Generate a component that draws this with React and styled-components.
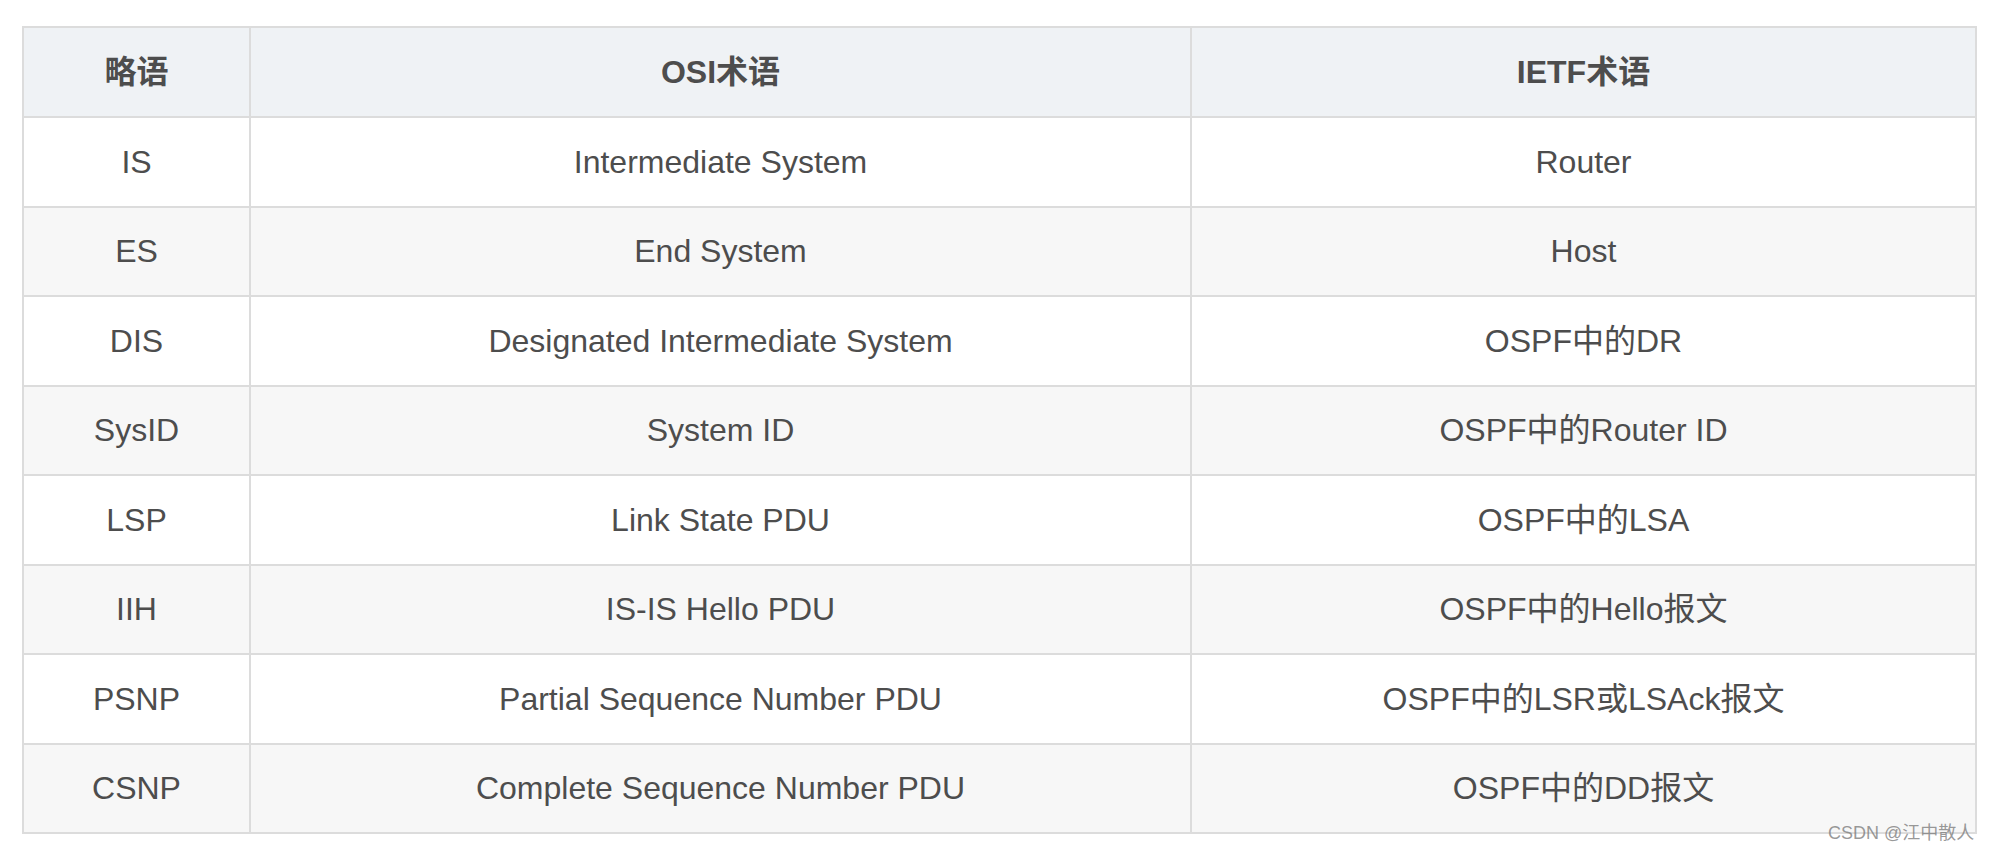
import React from "react";
import styled, { createGlobalStyle } from "styled-components";

const GlobalStyle = createGlobalStyle`
  body {
    margin: 0;
    background: #ffffff;
    font-family: "Liberation Sans", "Noto Sans CJK SC", sans-serif;
  }
`;

const Page = styled.div`
  position: relative;
  width: 2000px;
  height: 853px;
  padding: 26px 0 0 22px;
  box-sizing: border-box;
`;

const Table = styled.table`
  width: 1953px;
  border-collapse: collapse;
  table-layout: fixed;
  color: #4d4d4d;
  font-size: 32px;
`;

const HeadCell = styled.th`
  height: 88px;
  padding: 0;
  background: #eff2f5;
  border: 2px solid #dcdcdc;
  font-weight: bold;
  text-align: center;
  line-height: 36px;
`;

const Row = styled.tr`
  background: ${(p) => (p.$striped ? "#f7f7f7" : "#ffffff")};
`;

const Cell = styled.td`
  height: 87.5px;
  padding: 0;
  border: 2px solid #dcdcdc;
  text-align: center;
  line-height: 36px;
`;

const Watermark = styled.div`
  position: absolute;
  left: 1828px;
  top: 822px;
  font-size: 18px;
  line-height: 22px;
  color: rgba(120, 120, 120, 0.75);
  white-space: nowrap;
`;

const rows = [
  ["IS", "Intermediate System", "Router"],
  ["ES", "End System", "Host"],
  ["DIS", "Designated Intermediate System", "OSPF中的DR"],
  ["SysID", "System ID", "OSPF中的Router ID"],
  ["LSP", "Link State PDU", "OSPF中的LSA"],
  ["IIH", "IS-IS Hello PDU", "OSPF中的Hello报文"],
  ["PSNP", "Partial Sequence Number PDU", "OSPF中的LSR或LSAck报文"],
  ["CSNP", "Complete Sequence Number PDU", "OSPF中的DD报文"],
];

export default function App() {
  return (
    <Page>
      <GlobalStyle />
      <Table>
        <colgroup>
          <col style={{ width: 227 }} />
          <col style={{ width: 941 }} />
          <col style={{ width: 785 }} />
        </colgroup>
        <thead>
          <tr>
            <HeadCell>略语</HeadCell>
            <HeadCell>OSI术语</HeadCell>
            <HeadCell>IETF术语</HeadCell>
          </tr>
        </thead>
        <tbody>
          {rows.map((r, i) => (
            <Row key={r[0]} $striped={i % 2 === 1}>
              {r.map((c, j) => (
                <Cell key={j}>{c}</Cell>
              ))}
            </Row>
          ))}
        </tbody>
      </Table>
      <Watermark>CSDN @江中散人</Watermark>
    </Page>
  );
}
